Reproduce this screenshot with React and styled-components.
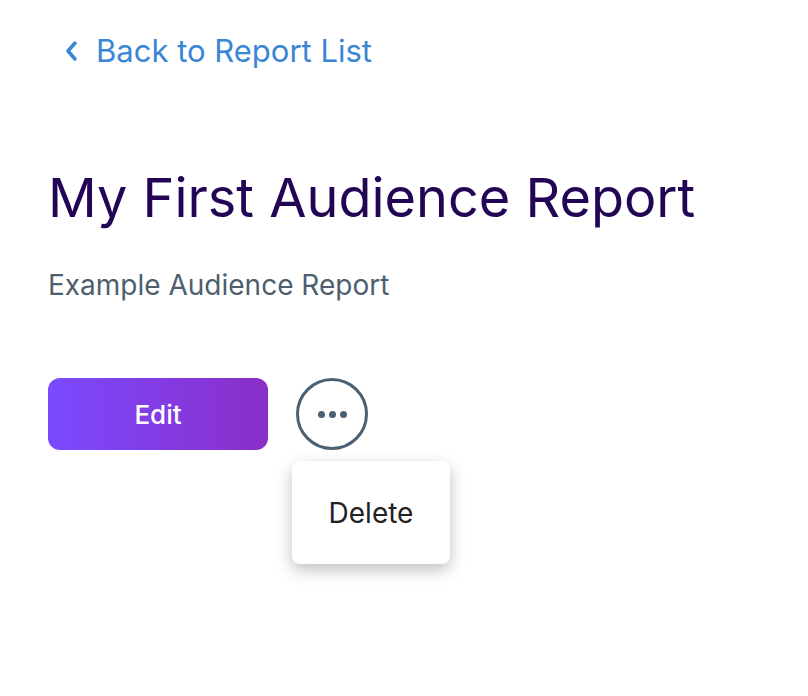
import React from 'react';
import styled, { createGlobalStyle } from 'styled-components';

const Global = createGlobalStyle`
  body { margin: 0; background: #fff; font-family: Inter, "Noto Sans", sans-serif; }
`;

const Page = styled.div`
  min-height: 100vh;
  box-sizing: border-box;
  padding: 32px 48px;
`;

const BackLink = styled.a`
  display: inline-flex;
  align-items: center;
  gap: 18px;
  margin-left: 16px;
  color: #3a86d4;
  font-size: 31px;
  text-decoration: none;
`;

const Title = styled.h1`
  margin: 95px 0 0;
  font-size: 54px;
  font-weight: 400;
  line-height: 68px;
  color: #220555;
`;

const Subtitle = styled.p`
  margin: 36px 0 0;
  font-size: 28px;
  color: #4d5f6e;
`;

const Actions = styled.div`
  display: flex;
  align-items: center;
  gap: 28px;
  margin-top: 76px;
`;

const EditButton = styled.button`
  width: 220px;
  height: 72px;
  border: none;
  border-radius: 12px;
  background: linear-gradient(90deg, #7a4aff, #8a2ec8);
  color: #fff;
  font-family: inherit;
  font-size: 26px;
  font-weight: 500;
`;

const MoreWrap = styled.div`
  position: relative;
`;

const MoreButton = styled.button`
  width: 72px;
  height: 72px;
  border: 3px solid #4b6072;
  border-radius: 50%;
  background: #fff;
  display: flex;
  align-items: center;
  justify-content: center;
  gap: 4px;
  padding: 0;
`;

const Dot = styled.span`
  width: 7px;
  height: 7px;
  border-radius: 50%;
  background: #4b6072;
`;

const Menu = styled.div`
  position: absolute;
  top: 83px;
  left: -4px;
  width: 158px;
  height: 103px;
  background: #fff;
  border-radius: 8px;
  box-shadow: 0 6px 16px rgba(0,0,0,0.25);
  display: flex;
  align-items: center;
  justify-content: center;
  font-size: 28px;
  color: #222;
`;

export default function App() {
  return (
    <Page>
      <Global />
      <BackLink href="#">
        <svg width="14" height="22" viewBox="0 0 14 22">
          <path d="M11 3 L4 11 L11 19" fill="none" stroke="#3a86d4" strokeWidth="3.5" strokeLinecap="round" strokeLinejoin="round" />
        </svg>
        Back to Report List
      </BackLink>
      <Title>My First Audience Report</Title>
      <Subtitle>Example Audience Report</Subtitle>
      <Actions>
        <EditButton>Edit</EditButton>
        <MoreWrap>
          <MoreButton><Dot /><Dot /><Dot /></MoreButton>
          <Menu>Delete</Menu>
        </MoreWrap>
      </Actions>
    </Page>
  );
}
